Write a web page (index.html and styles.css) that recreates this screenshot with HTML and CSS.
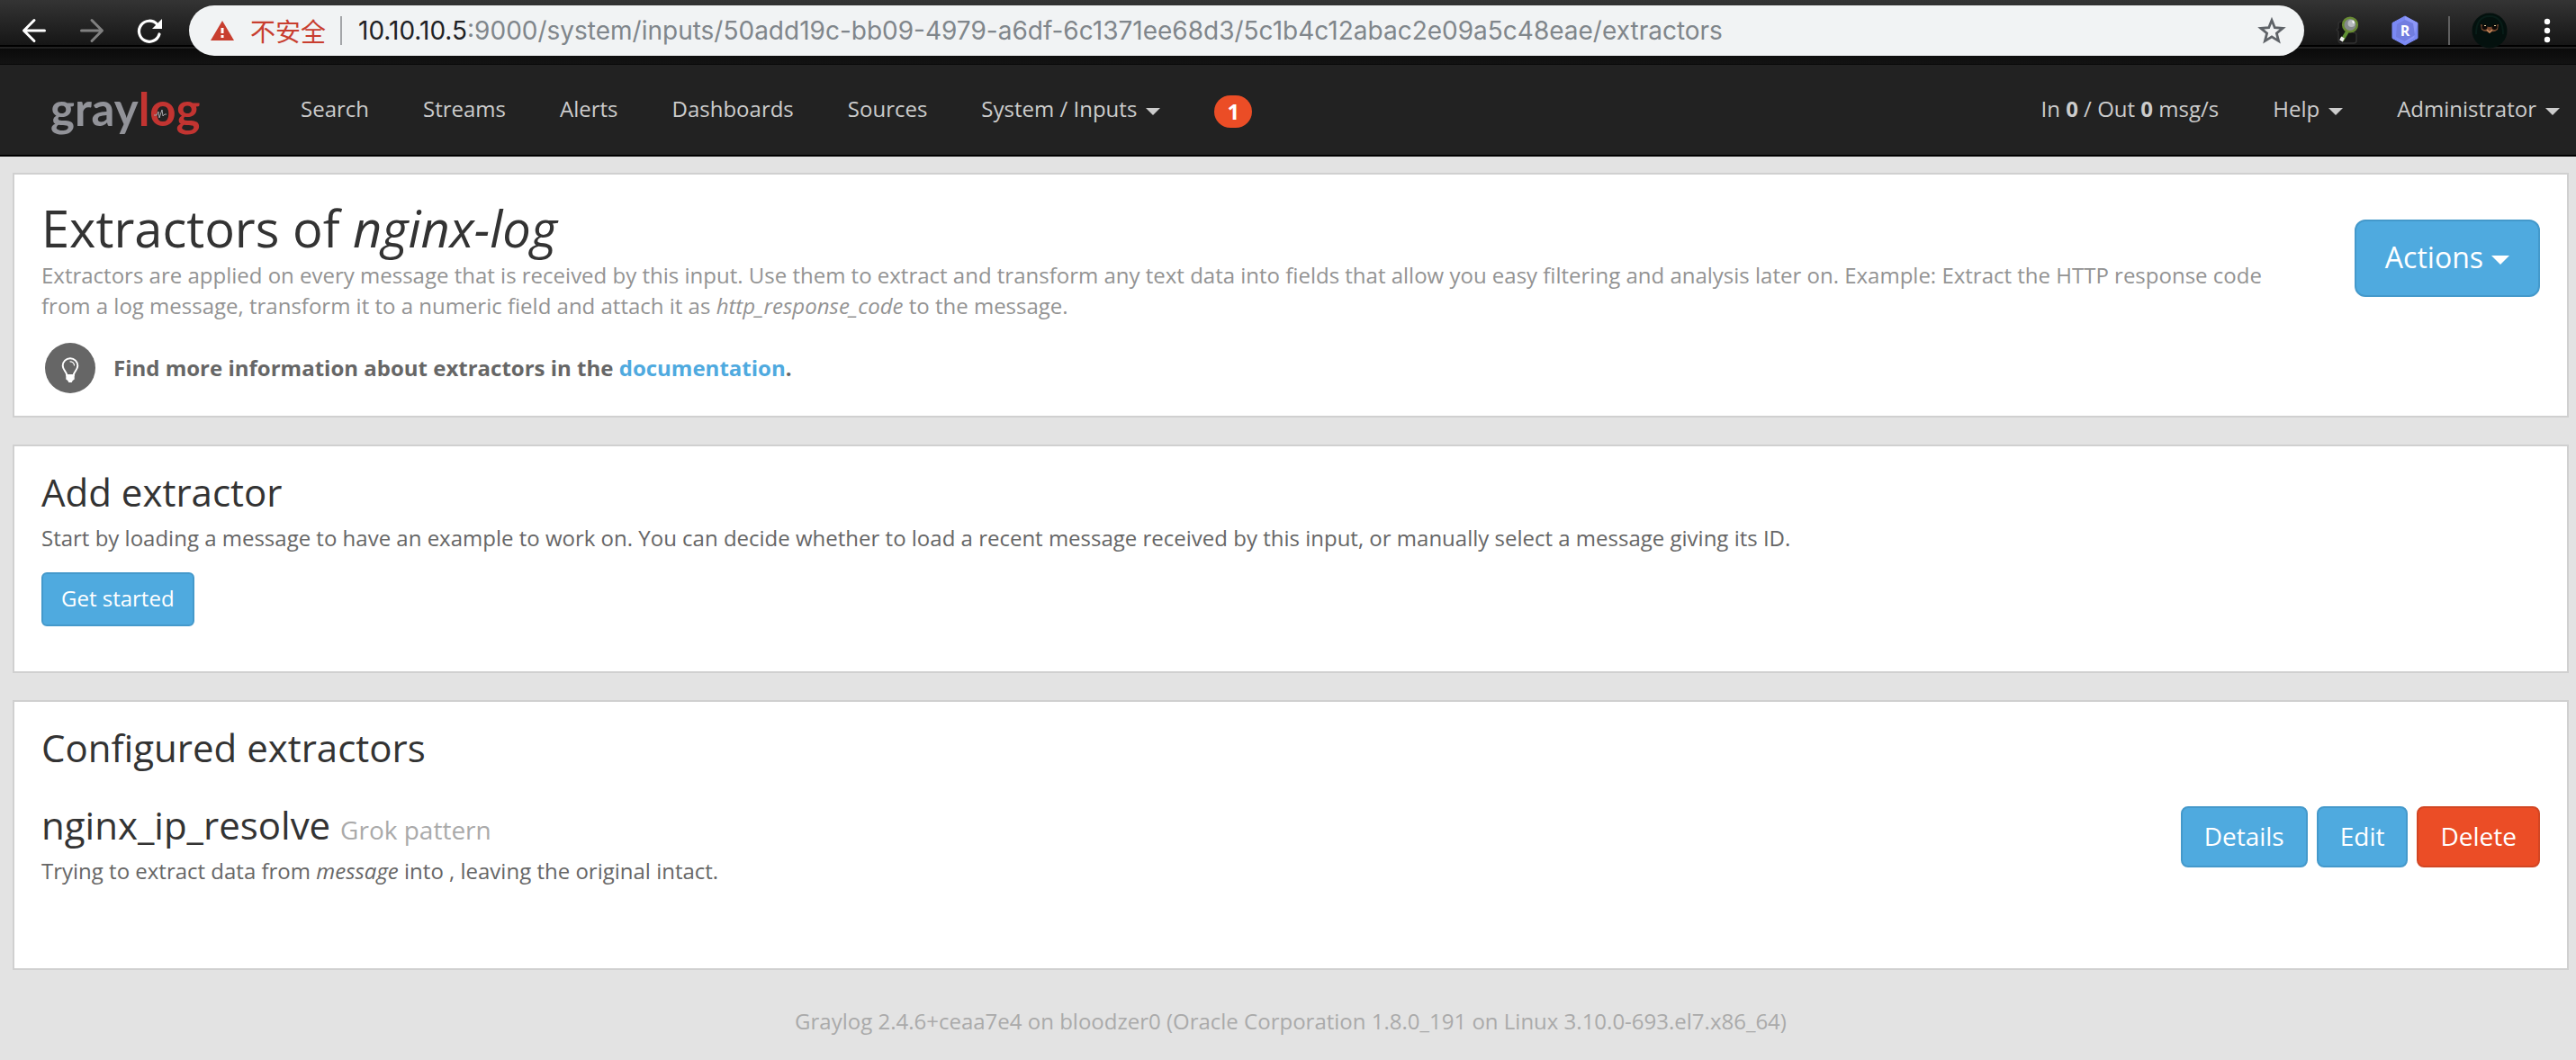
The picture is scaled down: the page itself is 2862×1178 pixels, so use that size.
FILE: index.html
```html
<!DOCTYPE html>
<html lang="en">
<head>
<meta charset="utf-8">
<meta name="viewport" content="width=device-width, initial-scale=1">
<title>Extractors of nginx-log</title>
<link rel="stylesheet" href="styles.css">
</head>
<body>
<header class="toolbar">
  <div class="toolbar-group">
    <button class="tool" type="button" aria-label="Back">
      <svg viewBox="0 0 40 40" fill="none" stroke="#fff" stroke-width="3" stroke-linecap="round" stroke-linejoin="round"><path d="M31.500 20H9M20 8.500L8.500 20 20 31.500"/></svg>
    </button>
    <button class="tool" type="button" aria-label="Forward">
      <svg viewBox="0 0 40 40" fill="none" stroke="#808080" stroke-width="3" stroke-linecap="round" stroke-linejoin="round"><path d="M8.500 20H31M20 8.500L31.500 20 20 31.500"/></svg>
    </button>
    <button class="tool" type="button" aria-label="Reload">
      <svg viewBox="0 0 40 40"><path d="M28.500 13A11.500 11.500 0 1 0 31 24" fill="none" stroke="#fff" stroke-width="3.200" stroke-linecap="round"/><path d="M34 7V18H23Z" fill="#fff"/></svg>
    </button>
  </div>
  <div class="address">
    <svg class="warning" viewBox="0 0 26 22" aria-hidden="true"><path d="M13 0L26 22H0Z" fill="#c83e2f"/><path d="M11.500 8h3v6h-3zM11.500 16h3v3h-3z" fill="#fff"/></svg>
    <span class="insecure" lang="zh">不安全</span>
    <span class="address-rule"></span>
    <label class="host" for="address">10.10.10.5</label>
    <input class="path" id="address" type="text" value=":9000/system/inputs/50add19c-bb09-4979-a6df-6c1371ee68d3/5c1b4c12abac2e09a5c48eae/extractors">
    <button class="star" type="button" aria-label="Bookmark">
      <svg viewBox="0 0 32 32" fill="none" stroke="#5f6368" stroke-width="2.800"><path d="M16 4.500L19.300 12.700 28.200 13.300 21.400 19 23.600 27.600 16 22.900 8.400 27.600 10.600 19 3.800 13.300 12.700 12.700Z"/></svg>
    </button>
  </div>
  <div class="toolbar-group">
    <button class="tool" type="button" aria-label="Inspector extension">
      <svg viewBox="0 0 40 40"><path d="M13 10q-3 0-3 3v4l-2 2 2 2v9q0 4 4 4h13q3 0 3-3v-6q0-3-4-3" fill="#151515" stroke="#303030" stroke-width="1.500"/><path d="M20 21l-6 10" stroke="#5f8f33" stroke-width="4"/><path d="M15 27.500l-2 4" stroke="#f0f0f0" stroke-width="4"/><circle cx="23" cy="13.500" r="7.800" fill="#85898c" stroke="#688a34" stroke-width="2.600"/><circle cx="24.500" cy="12" r="4" fill="#b7bbbe"/><path d="M26 9l1 3" stroke="#f4f4f4" stroke-width="2"/></svg>
    </button>
    <button class="tool" type="button" aria-label="R extension">
      <svg viewBox="0 0 40 40"><path d="M20 4L34 11.500V28.500L20 36 6 28.500V11.500Z" fill="#7b89f4" stroke="#7b89f4" stroke-width="1" stroke-linejoin="round"/><path d="M20 4L34 11.500 30 28 20 33Z" fill="#8d98f8"/><path d="M20 8L29 12 31 25 20 32 10 27 11 13Z" fill="#717de0"/><text x="20" y="26" text-anchor="middle" class="ext-letter">R</text></svg>
    </button>
    <span class="tool-rule"></span>
    <button class="tool" type="button" aria-label="Profile">
      <svg viewBox="0 0 40 40"><circle cx="20" cy="20" r="19.500" fill="#04110e"/><path d="M5 24Q5 4 20 4T35 24" fill="none" stroke="#081d18" stroke-width="2"/><path d="M10 13l9 3h2l9-3-1 6q-4 3-6 2l-3 2-3-2q-4 0-6-2z" fill="#75482f"/><circle cx="14.500" cy="16" r="3" fill="#0b0907"/><circle cx="25.500" cy="16" r="3" fill="#0b0907"/><path d="M14 14.500h2M25 14.500h2" stroke="#e8d7a0" stroke-width="1.200"/><path d="M17 19l3 3 3-3" stroke="#c58b5d" stroke-width="1.500" fill="none"/></svg>
    </button>
    <button class="tool" type="button" aria-label="Menu">
      <svg viewBox="0 0 40 40" fill="#fff"><circle cx="20" cy="10" r="3.200"/><circle cx="20" cy="20" r="3.200"/><circle cx="20" cy="30" r="3.200"/></svg>
    </button>
  </div>
</header>

<nav class="navbar">
  <a class="brand" href="#"><span class="brand-gray">gray</span><span class="brand-log">log</span><svg class="pulse" viewBox="0 0 16 12" aria-hidden="true"><path d="M1 7h3l2-4 1 7 3-9 1 7 2-2h2" fill="none" stroke="#a5a6aa" stroke-width="1"/></svg></a>
  <div class="nav-links">
    <a href="#">Search</a>
    <a href="#">Streams</a>
    <a href="#">Alerts</a>
    <a href="#">Dashboards</a>
    <a href="#">Sources</a>
    <a href="#">System / Inputs<span class="caret"></span></a>
    <a class="badge" href="#">1</a>
  </div>
  <div class="nav-links nav-right">
    <a href="#"><span>In <b>0</b> / Out <b>0</b> msg/s</span></a>
    <a href="#">Help<span class="caret"></span></a>
    <a href="#">Administrator<span class="caret"></span></a>
  </div>
</nav>

<main class="page">
  <section class="panel panel-intro">
    <div class="row intro-row">
      <div class="row-main">
        <h1>Extractors of <em>nginx-log</em></h1>
        <p class="description">Extractors are applied on every message that is received by this input. Use them to extract and transform any text data into fields that allow you easy filtering and analysis later on. Example: Extract the HTTP response code from a log message, transform it to a numeric field and attach it as <em>http_response_code</em> to the message.</p>
      </div>
      <button class="btn btn-large" type="button">Actions<span class="caret"></span></button>
    </div>
    <div class="hint">
      <svg class="bulb" viewBox="0 0 56 56" aria-hidden="true"><circle cx="28" cy="28" r="28" fill="#666"/><path d="M28 17.200a8.300 8.300 0 0 0-8.300 8.300c0 4.500 4.200 6.500 4.600 10.500h7.400c.4-4 4.600-6 4.600-10.500a8.300 8.300 0 0 0-8.300-8.300z" fill="none" stroke="#fff" stroke-width="2"/><path d="M28 20.800a4.500 4.500 0 0 1 4.500 4.200" fill="none" stroke="#fff" stroke-width="1.200" stroke-linecap="round"/><path d="M23.300 35.500h9.400v5l-2 1.500-1 2h-3.400l-1-2-2-1.500z" fill="#fff"/></svg>
      <p>Find more information about extractors in the <a href="#">documentation</a>.</p>
    </div>
  </section>

  <section class="panel panel-add">
    <h2>Add extractor</h2>
    <p>Start by loading a message to have an example to work on. You can decide whether to load a recent message received by this input, or manually select a message giving its ID.</p>
    <button class="btn" type="button">Get started</button>
  </section>

  <section class="panel panel-list">
    <h2>Configured extractors</h2>
    <div class="row extractor">
      <div class="row-main">
        <h2>nginx_ip_resolve <small>Grok pattern</small></h2>
        <p>Trying to extract data from <em>message</em> into , leaving the original intact.</p>
      </div>
      <div class="actions">
        <button class="btn btn-medium" type="button">Details</button>
        <button class="btn btn-medium" type="button">Edit</button>
        <button class="btn btn-medium btn-danger" type="button">Delete</button>
      </div>
    </div>
  </section>

  <footer>Graylog 2.4.6+ceaa7e4 on bloodzer0 (Oracle Corporation 1.8.0_191 on Linux 3.10.0-693.el7.x86_64)</footer>
</main>
</body>
</html>
```
FILE: styles.css
```css
* { box-sizing: border-box; }

body {
  margin: 0;
  background: #e3e3e3;
  color: #666;
  font: 24px/34px "Open Sans", "Noto Sans", sans-serif;
}

h1, h2, p { margin: 0; }
h1, h2 { color: #333; font-weight: 400; }
h1 { font-size: 56px; line-height: 62px; }
h2 { font-size: 42px; line-height: 46px; }
h2 small { color: #aaa; font-size: 28px; line-height: 28px; }
button { font: inherit; cursor: pointer; }
svg { display: block; }

/* Browser toolbar */
.toolbar {
  display: flex;
  align-items: center;
  gap: 24px;
  padding: 6px 12px 10px 18px;
  background: linear-gradient(#343434 0, #161616 50px, #000 50px, #000 52px, #222 52px, #222 54px, #0a0a0a 54px, #131313 71px, #080808 71px);
}
.toolbar-group { display: flex; align-items: center; gap: 24px; }
.tool { width: 40px; height: 40px; padding: 0; border: 0; background: none; }
.tool-rule { width: 2px; height: 32px; margin-left: 4px; background: #606060; }
.ext-letter { font: 700 16px "Open Sans", sans-serif; fill: #fff; }

.address {
  display: flex;
  align-items: center;
  flex: 1;
  height: 56px;
  margin-right: 4px;
  padding: 0 20px 0 24px;
  border-radius: 28px;
  background: #f1f3f4;
  font: 28px/34px Inter, "Noto Sans CJK SC", sans-serif;
}
.warning { width: 26px; height: 22px; }
.insecure { margin-left: 18px; color: #c83e2f; font-family: "Noto Sans CJK SC", sans-serif; }
.address-rule { width: 2px; height: 32px; margin: 0 18px 0 16px; background: #a3a5a8; }
.host { color: #202124; }
.path { flex: 1; min-width: 0; padding: 0; border: 0; outline: 0; background: none; color: #80868b; font: inherit; }
.star { width: 32px; height: 32px; padding: 0; border: 0; background: none; }

/* Application navigation */
.navbar {
  display: flex;
  align-items: center;
  min-height: 102px;
  padding: 0 18px 2px 56px;
  border-bottom: 2px solid #000;
  background: #222;
}
.navbar a { color: #ccc; text-decoration: none; white-space: nowrap; }
.navbar .brand {
  position: relative;
  flex: 0 0 278px;
  font: 700 51px/60px Lato, sans-serif;
}
.brand-gray { color: #929399; }
.brand-log { color: #c23431; }
.pulse { position: absolute; left: 114px; top: 30px; width: 16px; height: 12px; }
.nav-links { display: flex; align-items: center; gap: 60px; }
.nav-links a { display: flex; align-items: center; }
.nav-right { margin-left: auto; }
.nav-right span { white-space: pre; }
.caret {
  margin: 6px 0 0 10px;
  border: 8px solid transparent;
  border-top-color: currentColor;
  border-bottom: 0;
}
.navbar .badge {
  justify-content: center;
  width: 42px;
  height: 36px;
  margin-top: 6px;
  border-radius: 18px;
  background: #eb4d26;
  color: #fff;
  font-weight: 700;
}

/* Content */
.page {
  display: flex;
  flex-direction: column;
  gap: 30px;
  padding: 18px 8px 26px 14px;
}
.panel { padding: 28px 30px 50px; border: 2px solid #d0d0d0; background: #fff; }
.panel-intro { padding-bottom: 25px; }
.panel-list { padding-bottom: 91px; }
.panel a { color: #4faadf; text-decoration: none; }

.row { display: flex; align-items: flex-start; gap: 80px; }
.row-main { flex: 1; min-width: 0; }
.description { margin-top: 5px; color: #939393; }
.hint { display: flex; align-items: center; gap: 20px; margin-top: 24px; padding-left: 4px; font-weight: 700; }
.bulb { width: 56px; height: 56px; }
.panel h2 + p { margin-top: 11px; }
.extractor { margin-top: 40px; }
.actions { display: flex; gap: 10px; margin-top: 2px; }

.btn {
  display: inline-flex;
  align-items: center;
  justify-content: center;
  height: 60px;
  padding: 0 20px 2px;
  border: 2px solid #4499cb;
  border-radius: 6px;
  background: #4faadf;
  color: #fff;
}
.panel-add .btn { display: flex; margin-top: 21px; }
.btn-medium { height: 68px; padding: 0 24px 2px; border-radius: 8px; font-size: 28px; }
.btn-large { height: 86px; padding: 0 32px 2px; border-radius: 12px; font-size: 32px; }
.intro-row .btn { margin-top: 22px; }
.btn-large .caret { margin: 6px 0 0 9px; border-width: 10px 10px 0; }
.btn-danger { border-color: #d24623; background: #eb4d26; }

footer { margin-top: 10px; color: #aaa; text-align: center; }
```
